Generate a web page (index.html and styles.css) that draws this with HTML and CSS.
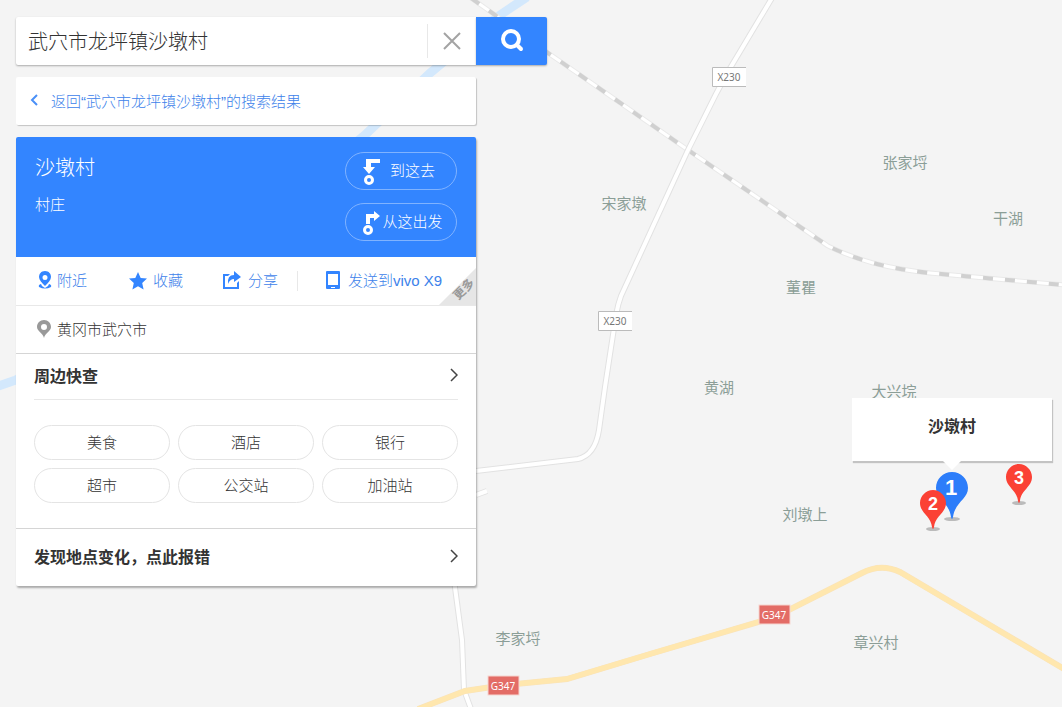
FILE: index.html
```html
<!DOCTYPE html>
<html lang="zh-CN">
<head>
    <meta charset="UTF-8">
    <meta name="viewport" content="width=device-width, initial-scale=1.0">
    <title>沙墩村</title>
    <link rel="stylesheet" href="styles.css">
</head>
<body>
    <div class="page">
        <!-- Map -->
        <div class="map">
            <svg class="map-canvas" width="100%" height="100%" aria-label="地图">
                <path class="river" d="M527 -3 L500 15 L430 73 L365 135 L200 270 L60 355 L16 380 L-4 387"/>

                <path class="rail-edge" d="M471 -2 L495 15 L548 53 L580 75 L688 150 L780 213 L828 246 Q848 256 873 263 Q900 270 930 273 L1064 285"/>
                <path class="rail" d="M471 -2 L495 15 L548 53 L580 75 L688 150 L780 213 L828 246 Q848 256 873 263 Q900 270 930 273 L1064 285"/>
                <path class="rail-dash" d="M471 -2 L495 15 L548 53 L580 75 L688 150 L780 213 L828 246 Q848 256 873 263 Q900 270 930 273 L1064 285"/>

                <path class="road-edge" d="M772 -2 L729 70 L716 94 L688 150 L621 296 Q618 304 616 315 L605 387 L599 430 Q595 455 578 459 L476 471 M476 495 L487 491 M454 580 L462 640 L464 690 L471 709"/>
                <path class="road" d="M772 -2 L729 70 L716 94 L688 150 L621 296 Q618 304 616 315 L605 387 L599 430 Q595 455 578 459 L476 471 M476 495 L487 491 M454 580 L462 640 L464 690 L471 709"/>

                <path class="highway-edge" d="M418 709 L465 691 L505 685 L567 679 L650 654 L775 617 L862 573 Q881 563 900 572 L1064 669"/>
                <path class="highway" d="M418 709 L465 691 L505 685 L567 679 L650 654 L775 617 L862 573 Q881 563 900 572 L1064 669"/>

                <g class="shield">
                    <rect x="712" y="67" width="34" height="20"/>
                    <path d="M746 67.500 H712.500 V86.500 H746"/>
                    <text x="729" y="81">X230</text>
                    <rect x="598" y="311" width="34" height="20"/>
                    <path d="M632 311.500 H598.500 V330.500 H632"/>
                    <text x="615" y="325">X230</text>
                </g>
                <g class="shield shield-red">
                    <rect x="759" y="605" width="31" height="19"/>
                    <text x="774" y="619">G347</text>
                    <rect x="488" y="676" width="31" height="19"/>
                    <text x="503" y="690">G347</text>
                </g>
                <g class="place">
                    <text x="905" y="168">张家埒</text>
                    <text x="624" y="209">宋家墩</text>
                    <text x="1008" y="224">干湖</text>
                    <text x="801" y="293">董瞿</text>
                    <text x="719" y="393">黄湖</text>
                    <text x="894" y="397">大兴垸</text>
                    <text x="805" y="520">刘墩上</text>
                    <text x="518" y="644">李家埒</text>
                    <text x="876" y="648">章兴村</text>
                </g>
            </svg>

            <button type="button" class="pin pin-1" aria-label="沙墩村 1">
                <svg width="34" height="52" viewBox="0 0 34 52">
                    <ellipse class="pin-shadow" cx="18" cy="48" rx="8" ry="2"/>
                    <path class="pin-blue" d="M18 1 C9 1 2 8 2 17 C2 28 15 31 17 46 Q18 50 19 46 C21 31 34 28 34 17 C34 8 27 1 18 1Z"/>
                    <text x="17" y="24">1</text>
                </svg>
            </button>
            <button type="button" class="pin pin-2" aria-label="标注 2">
                <svg width="28" height="42" viewBox="0 0 28 42">
                    <ellipse class="pin-shadow" cx="14" cy="39" rx="7" ry="2"/>
                    <path class="pin-red" d="M14 0 C7 0 1 6 1 13 C1 23 12 26 13 37 Q14 41 15 37 C16 26 27 23 27 13 C27 6 21 0 14 0Z"/>
                    <text x="14" y="20">2</text>
                </svg>
            </button>
            <button type="button" class="pin pin-3" aria-label="标注 3">
                <svg width="28" height="42" viewBox="0 0 28 42">
                    <ellipse class="pin-shadow" cx="14" cy="39" rx="7" ry="2"/>
                    <path class="pin-red" d="M14 0 C7 0 1 6 1 13 C1 23 12 26 13 37 Q14 41 15 37 C16 26 27 23 27 13 C27 6 21 0 14 0Z"/>
                    <text x="14" y="20">3</text>
                </svg>
            </button>
            <div class="popup">沙墩村</div>
        </div>

        <!-- Search and place details -->
        <div class="sidebar">
            <form class="search">
                <div class="search-box">
                    <input type="text" class="search-input" aria-label="搜索地点" value="武穴市龙坪镇沙墩村">
                    <button type="reset" class="search-clear" aria-label="清除">
                        <svg width="18" height="18" viewBox="0 0 18 18"><path d="M1 1 L17 17 M17 1 L1 17"/></svg>
                    </button>
                </div>
                <button type="submit" class="search-submit" aria-label="搜索">
                    <svg width="24" height="24" viewBox="0 0 24 24"><circle cx="11" cy="10" r="8"/><path d="M17 16 L21 20"/></svg>
                </button>
            </form>

            <a href="#" class="card back">
                <svg width="8" height="12" viewBox="0 0 8 12"><path d="M7 1 L2 6 L7 11"/></svg>
                <span>返回“武穴市龙坪镇沙墩村”的搜索结果</span>
            </a>

            <main class="card detail">
                <header class="place-head">
                    <div>
                        <h1>沙墩村</h1>
                        <p>村庄</p>
                    </div>
                    <div class="routes">
                        <button type="button" class="route">
                            <svg width="20" height="28" viewBox="0 0 20 28"><path class="fill" d="M4 2 H18 V6 H9 V10 H13 L7 17 L1 10 H4Z"/><circle cx="7" cy="23" r="3.500"/></svg>
                            <span>到这去</span>
                        </button>
                        <button type="button" class="route">
                            <svg width="20" height="28" viewBox="0 0 20 28"><path class="fill" d="M4 16 V6 H12 V3 L18 8 L12 13 V10 H8 V16Z"/><circle cx="6" cy="22" r="3.500"/></svg>
                            <span>从这出发</span>
                        </button>
                    </div>
                </header>

                <div class="actions">
                    <a href="#">
                        <svg width="20" height="20" viewBox="0 0 20 20"><path fill-rule="evenodd" d="M13 0 C9 0 7 3 7 6 C7 9 10 12 13 15 C16 12 19 9 19 6 C19 3 17 0 13 0Z M13 4 A2.500 2.500 0 1 1 13 9 A2.500 2.500 0 1 1 13 4Z"/><path d="M9 13 Q6 14 7 16 Q13 19 19 16 Q20 14 17 13 L16 15 L13 17 L10 15Z"/></svg>
                        附近
                    </a>
                    <a href="#">
                        <svg width="20" height="20" viewBox="0 0 20 20"><path d="M11 1 L13.700 7 L20 7.600 L15.200 12 L16.600 18.500 L11 15.200 L5.400 18.500 L6.800 12 L2 7.600 L8.300 7Z"/></svg>
                        收藏
                    </a>
                    <a href="#">
                        <svg width="20" height="20" viewBox="0 0 20 20"><path d="M1 3 H8 L6 5 H3 V16 H15 V12 L17 10 V18 H1Z"/><path d="M12 0 L19 6 L12 11 V8 Q8 8 6 13 Q5 4 12 4Z"/></svg>
                        分享
                    </a>
                    <a href="#" class="send">
                        <svg width="20" height="20" viewBox="0 0 20 20"><path fill-rule="evenodd" d="M5 0 H17 Q18 0 18 1 V17 Q18 18 17 18 H5 Q4 18 4 17 V1 Q4 0 5 0Z M6 3 V14 H16 V3Z M9 16 V17 H13 V16Z"/></svg>
                        发送到vivo X9
                    </a>
                    <button type="button" class="more"><span>更多</span></button>
                </div>

                <div class="address">
                    <svg width="14" height="18" viewBox="0 0 14 18"><path fill-rule="evenodd" d="M7 0 C3 0 0 3 0 7 C0 11 6 13 7 18 C8 13 14 11 14 7 C14 3 11 0 7 0Z M7 4 A3 3 0 1 1 7 10 A3 3 0 1 1 7 4Z"/></svg>
                    <span>黄冈市武穴市</span>
                </div>

                <section class="nearby">
                    <h2>
                        <a href="#" class="row-link">
                            周边快查
                            <svg width="8" height="14" viewBox="0 0 8 14"><path d="M1 1 L7 7 L1 13"/></svg>
                        </a>
                    </h2>
                    <div class="tags">
                        <a href="#">美食</a>
                        <a href="#">酒店</a>
                        <a href="#">银行</a>
                        <a href="#">超市</a>
                        <a href="#">公交站</a>
                        <a href="#">加油站</a>
                    </div>
                </section>

                <a href="#" class="row-link report">
                    发现地点变化，点此报错
                    <svg width="8" height="14" viewBox="0 0 8 14"><path d="M1 1 L7 7 L1 13"/></svg>
                </a>
            </main>
        </div>
    </div>
</body>
</html>
```

FILE: styles.css
```css
* { box-sizing: border-box; }
body {
    margin: 0;
    font-family: "Liberation Sans", "Noto Sans CJK SC", sans-serif;
    font-size: 15px;
    font-weight: 300;
    color: #333;
}
a { color: inherit; text-decoration: none; }
button, input {
    font: inherit;
    color: inherit;
    border: 0;
    padding: 0;
    background: none;
}
button { cursor: pointer; }
h1, h2, p { margin: 0; }
svg { flex: none; display: block; }

.page {
    position: relative;
    min-height: 100vh;
    overflow: hidden;
    background: #f4f4f4;
}

/* Map */
.map {
    position: absolute;
    inset: 0;
}
.map-canvas path { fill: none; }
.map-canvas .river { stroke: #d3e8fc; stroke-width: 9; }
.map-canvas .rail-edge { stroke: #e9e9e9; stroke-width: 5; }
.map-canvas .rail { stroke: #fff; stroke-width: 3; }
.map-canvas .rail-dash { stroke: #d0d0d0; stroke-width: 4; stroke-dasharray: 10 12; }
.map-canvas .road-edge { stroke: #e2e2e2; stroke-width: 6; }
.map-canvas .road { stroke: #fff; stroke-width: 4; }
.map-canvas .highway-edge { stroke: #f9e3ba; stroke-width: 6; }
.map-canvas .highway { stroke: #ffe7ae; stroke-width: 5; }
.shield { font: 10px "Noto Sans", sans-serif; text-anchor: middle; }
.shield rect { fill: #fff; }
.shield path { stroke: #bbb; }
.shield text { fill: #777; }
.shield-red rect { fill: #e36c66; stroke: #f6d5d0; }
.shield-red text { fill: #fff; }
.place {
    font-family: "Noto Sans CJK SC", sans-serif;
    font-size: 15px;
    font-weight: 400;
    text-anchor: middle;
    fill: #8b9e97;
}

.pin { position: absolute; }
.pin-1 { left: 934px; top: 471px; }
.pin-2 { left: 919px; top: 490px; }
.pin-3 { left: 1005px; top: 464px; }
.pin text {
    fill: #fff;
    font-size: 18px;
    font-weight: bold;
    text-anchor: middle;
}
.pin-1 text { font-size: 22px; }
.pin-blue { fill: #2c7dfa; }
.pin-red { fill: #fb4135; }
.pin-shadow { fill: #bbb; }

.popup {
    position: absolute;
    left: 852px;
    top: 398px;
    width: 200px;
    padding: 17px 10px 22px;
    background: #fff;
    box-shadow: 1px 2px 1px rgba(0,0,0,0.2);
    font-size: 16px;
    font-weight: bold;
    line-height: 24px;
    text-align: center;
}
.popup::after {
    content: "";
    position: absolute;
    left: 50%;
    top: 100%;
    margin-left: -9px;
    border: 9px solid transparent;
    border-top-color: #fff;
    border-bottom: 0;
}

/* Sidebar */
.sidebar {
    position: relative;
    display: flex;
    flex-direction: column;
    gap: 12px;
    width: 531px;
    max-width: 100%;
    margin: 17px 0 17px 16px;
}
.search {
    display: flex;
    height: 48px;
}
.search-box {
    display: flex;
    align-items: center;
    flex: 1;
    background: #fff;
    border-radius: 2px 0 0 2px;
    box-shadow: 0 1px 2px rgba(0,0,0,0.3);
}
.search-input {
    flex: 1;
    min-width: 0;
    height: 48px;
    padding: 0 12px 2px;
    font-size: 20px;
    outline: none;
}
.search-clear {
    display: flex;
    align-items: center;
    justify-content: center;
    width: 49px;
    height: 34px;
    border-left: 1px solid #e8e8e8;
}
.search-clear path { stroke: #a3a3a3; stroke-width: 2; }
.search-submit {
    display: flex;
    align-items: center;
    justify-content: center;
    width: 71px;
    background: #3385ff;
    border-radius: 0 2px 2px 0;
    box-shadow: 0 1px 2px rgba(0,0,0,0.3);
}
.search-submit svg { fill: none; stroke: #fff; stroke-width: 4; stroke-linecap: round; }

.card {
    width: 460px;
    max-width: 100%;
    background: #fff;
    border-radius: 2px;
    box-shadow: 1px 1px 1px rgba(0,0,0,0.2);
}
.back {
    display: flex;
    align-items: center;
    gap: 13px;
    height: 48px;
    padding: 0 14px 2px;
    color: #3d82ea;
}
.back svg { fill: none; stroke: #4a90f7; stroke-width: 2; }
.detail { box-shadow: 1px 2px 2px rgba(0,0,0,0.3); }

.place-head {
    display: flex;
    justify-content: space-between;
    padding: 15px 19px 16px;
    background: #3385ff;
    border-radius: 2px 2px 0 0;
    color: #fff;
    line-height: 24px;
}
.place-head h1 {
    margin: 4px 0 13px;
    font-size: 20px;
    font-weight: 300;
}
.routes {
    display: flex;
    flex-direction: column;
    gap: 13px;
}
.route {
    display: flex;
    align-items: center;
    width: 112px;
    height: 38px;
    padding: 0 13px 0 16px;
    border: 1px solid #80b3ff;
    border-radius: 19px;
}
.route span { flex: 1; text-align: center; white-space: nowrap; }
.route .fill { fill: #fff; }
.route circle { fill: none; stroke: #fff; stroke-width: 3; }

.actions {
    position: relative;
    display: grid;
    grid-template-columns: 95px 95px 75px 1fr;
    align-items: center;
    height: 49px;
    padding-left: 16px;
    border-bottom: 1px solid #e8e8e8;
    color: #3d82ea;
}
.actions a {
    display: flex;
    align-items: center;
    gap: 6px;
    line-height: 20px;
    white-space: nowrap;
}
.actions a:first-child { gap: 5px; }
.actions svg { fill: #3385ff; }
.actions .send {
    padding-left: 24px;
    border-left: 1px solid #e8e8e8;
}
.more {
    position: absolute;
    right: 0;
    bottom: 0;
    width: 37px;
    height: 37px;
    background: #e6e6e6;
    clip-path: polygon(100% 0, 100% 100%, 0 100%);
    color: #999;
    font-size: 12px;
    font-weight: bold;
}
.more span {
    display: block;
    padding: 9px 0 0 6px;
    transform: rotate(-45deg);
    white-space: nowrap;
}

.address {
    display: flex;
    align-items: center;
    gap: 6px;
    height: 48px;
    padding: 0 21px 2px;
    border-bottom: 1px solid #d5d5d5;
}
.address svg { fill: #999; }

.nearby { padding: 0 18px 25px; border-bottom: 1px solid #d5d5d5; }
.nearby h2 { font-size: 16px; border-bottom: 1px solid #e8e8e8; }
.row-link {
    display: flex;
    align-items: center;
    justify-content: space-between;
    height: 45px;
    padding-bottom: 3px;
    font-size: 16px;
    font-weight: bold;
}
.row-link svg { fill: none; stroke: #444; stroke-width: 1.5px; }
.tags {
    display: grid;
    grid-template-columns: repeat(3, 1fr);
    gap: 8px;
    padding-top: 25px;
}
.tags a {
    height: 35px;
    border: 1px solid #e4e4e4;
    border-radius: 18px;
    line-height: 33px;
    text-align: center;
}
.report { height: 57px; padding: 0 18px 3px; }
```
